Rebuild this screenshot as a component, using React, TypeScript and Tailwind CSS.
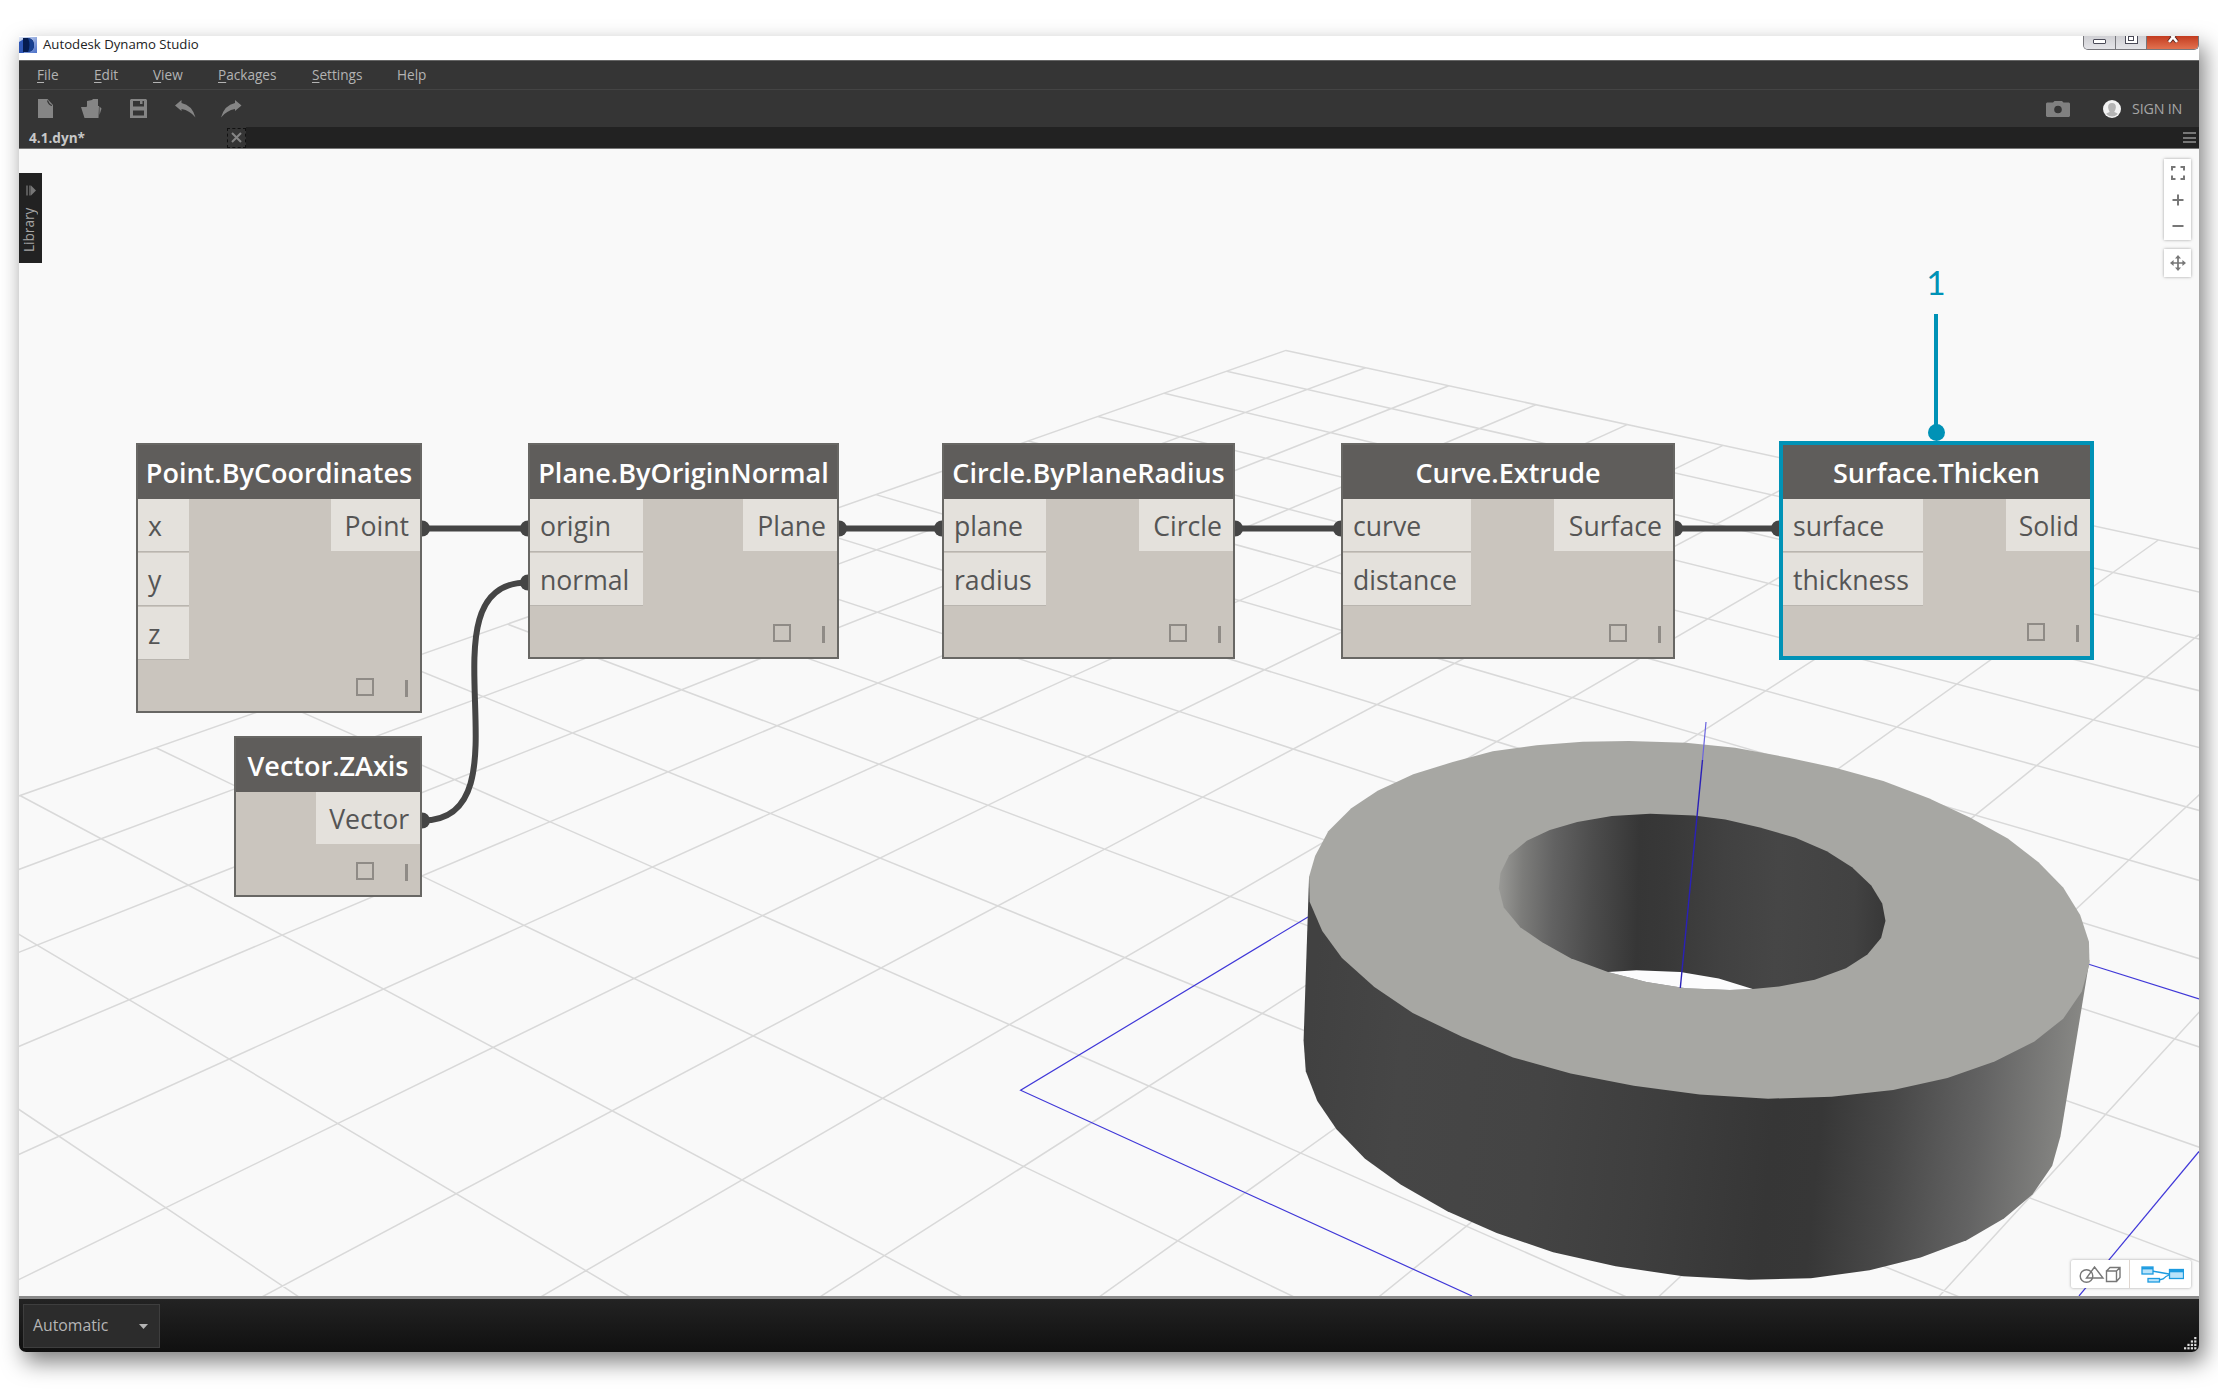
import React from "react";

type NodeSpec = {
  title: string;
  x: number;
  y: number;
  w: number;
  h: number;
  inputs: string[];
  inputWidth: number;
  output: string;
  outputWidth: number;
  selected?: boolean;
};

/* Positions are on the free canvas, measured from its top-left corner. */
const NODES: NodeSpec[] = [
  { title: "Point.ByCoordinates", x: 117, y: 294, w: 286, h: 270, inputs: ["x", "y", "z"], inputWidth: 51, output: "Point", outputWidth: 89 },
  { title: "Vector.ZAxis", x: 215, y: 587, w: 188, h: 161, inputs: [], inputWidth: 0, output: "Vector", outputWidth: 104 },
  { title: "Plane.ByOriginNormal", x: 509, y: 294, w: 311, h: 216, inputs: ["origin", "normal"], inputWidth: 113, output: "Plane", outputWidth: 94 },
  { title: "Circle.ByPlaneRadius", x: 923, y: 294, w: 293, h: 216, inputs: ["plane", "radius"], inputWidth: 102, output: "Circle", outputWidth: 94 },
  { title: "Curve.Extrude", x: 1322, y: 294, w: 334, h: 216, inputs: ["curve", "distance"], inputWidth: 128, output: "Surface", outputWidth: 119 },
  { title: "Surface.Thicken", x: 1762, y: 294, w: 311, h: 215, inputs: ["surface", "thickness"], inputWidth: 140, output: "Solid", outputWidth: 84, selected: true },
];

/* Perspective projection of the ground grid: (t, s) cell indices to canvas pixels. */
const depth = (t: number, s: number) => 1 - 0.0258 * t - 0.0219 * s;
const project = (t: number, s: number) => {
  const w = depth(t, s);
  return `${((1286 - 90.95 * t + 49.66 * s) / w).toFixed(1)} ${((350.4 + 11.27 * t + 9.24 * s) / w).toFixed(1)}`;
};
const GRID = Array.from({ length: 27 }, (_, i) => {
  const sEnd = (0.94 - 0.0258 * i) / 0.0219;
  const tEnd = (0.94 - 0.0219 * i) / 0.0258;
  return `M${project(i, 0)}L${project(i, sEnd)}M${project(0, i)}L${project(tEnd, i)}`;
}).join("");

const RING_TOP =
  "636,107 740,112 830,125 925,150 1012,177 1100,212 1183,257 1258,307 1327,362 1383,424 1428,490 1459,562 1475,632 1476,690 1462,762 1428,833 1375,893 1303,945 1217,988 1118,1019 1006,1037 890,1042 765,1031 645,1008 530,976 425,934 332,880 242,818 172,750 113,674 77,604 54,527 53,462 64,408 88,343 130,283 178,237 243,194 315,162 388,134 468,118 552,109";
const RING_SIDE =
  "53,462 43,890 47,970 68,1048 103,1122 155,1199 220,1266 305,1336 395,1393 498,1443 612,1480 735,1506 855,1515 968,1511 1075,1490 1168,1457 1252,1412 1320,1355 1372,1292 1408,1217 1423,1140 1476,680 800,500";
const RING_HOLE =
  "675,297 755,302 812,312 875,333 940,360 997,395 1043,437 1078,485 1098,532 1104,577 1096,622 1071,665 1032,701 975,731 910,749 862,755 820,758 740,753 668,737 598,711 530,675 478,633 438,594 408,542 399,492 402,452 418,406 450,368 492,340 542,319 605,303";

function Scene() {
  return (
    <svg className="absolute inset-0 h-full w-full" viewBox="19 149 2180 1147" preserveAspectRatio="none">
      <defs>
        <linearGradient id="side" gradientUnits="userSpaceOnUse" x1="43" y1="1000" x2="1476" y2="1100">
          <stop offset="0" stopColor="#414141" />
          <stop offset="0.12" stopColor="#464646" />
          <stop offset="0.3" stopColor="#444444" />
          <stop offset="0.45" stopColor="#3e3e3e" />
          <stop offset="0.6" stopColor="#363636" />
          <stop offset="0.66" stopColor="#373737" />
          <stop offset="0.75" stopColor="#484848" />
          <stop offset="0.86" stopColor="#636363" />
          <stop offset="0.95" stopColor="#7f7f7d" />
          <stop offset="1" stopColor="#8f8f8b" />
        </linearGradient>
        <linearGradient id="bore" gradientUnits="userSpaceOnUse" x1="399" y1="500" x2="1104" y2="515">
          <stop offset="0" stopColor="#999996" />
          <stop offset="0.06" stopColor="#7c7c7a" />
          <stop offset="0.14" stopColor="#626262" />
          <stop offset="0.24" stopColor="#4c4c4c" />
          <stop offset="0.36" stopColor="#363636" />
          <stop offset="0.43" stopColor="#383838" />
          <stop offset="0.58" stopColor="#414141" />
          <stop offset="0.72" stopColor="#464646" />
          <stop offset="0.92" stopColor="#424242" />
          <stop offset="1" stopColor="#383838" />
        </linearGradient>
      </defs>
      <path d={GRID} fill="none" stroke="#d9d9d9" strokeWidth="1.5" />
      <g fill="none" stroke="#4038d8" strokeWidth="1.2">
        <path d="M1308 917L1020.6 1090.3L1472 1296" />
        <path d="M2088 964L2199 999" />
        <path d="M2199 1151.5L2079 1296" />
      </g>
      <g transform="translate(1280 700) scale(0.54845 0.38265)">
        <polygon points={RING_SIDE} fill="url(#side)" />
        <polygon points={RING_TOP} fill="#a7a7a3" />
        <polygon points={RING_HOLE} fill="url(#bore)" />
        <polygon points="598,711 650,706 730,711 800,728 862,755 820,758 740,753 668,737" fill="#fcfcfd" />
      </g>
      <path d="M1706 722L1702.5 760" stroke="#6a64e0" strokeWidth="1.2" />
      <path d="M1702.5 760L1680.3 988" stroke="#2a20b8" strokeWidth="1.4" />
    </svg>
  );
}

function Wires() {
  const links: [number, number][] = [
    [422, 528],
    [839, 942],
    [1235, 1341],
    [1675, 1779],
  ];
  return (
    <svg className="absolute inset-0 h-full w-full" viewBox="19 149 2180 1147" preserveAspectRatio="none">
      <g fill="none" stroke="#454545" strokeWidth="6">
        {links.map(([a, b]) => (
          <path key={a} d={`M${a} 528.5H${b}`} />
        ))}
        <path d="M422 820.5C536 820.5 414 582.5 528 582.5" />
      </g>
      <g fill="#454545">
        {links.map(([a, b]) => (
          <React.Fragment key={a}>
            <circle cx={a} cy="528.5" r="8" />
            <circle cx={b} cy="528.5" r="8" />
          </React.Fragment>
        ))}
        <circle cx="528" cy="582.5" r="8" />
        <circle cx="422" cy="820.5" r="8" />
      </g>
    </svg>
  );
}

function GraphNode({ node }: { node: NodeSpec }) {
  return (
    <div
      className={`absolute flex flex-col border-2 border-[#686764] bg-[#cac5be] text-[#555555] ${node.selected ? "outline-[4px] -outline-offset-2 outline-[#0092b6]" : ""}`}
      style={{ left: node.x, top: node.y, width: node.w, height: node.h }}
    >
      <div className="flex h-[54px] shrink-0 items-center justify-center bg-[#5f5d5b] pt-px text-[27px] leading-none font-semibold whitespace-nowrap text-white">
        {node.title}
      </div>
      <div className="flex items-start justify-between text-[26.6px] leading-none">
        <div className="flex flex-col gap-[2px]">
          {node.inputs.map((name) => (
            <div key={name} className="flex h-[52px] items-center bg-[#e4e1dc] pt-[3px] pl-[10px] shadow-[0_1px_0_#b9b5af]" style={{ width: node.inputWidth }}>
              {name}
            </div>
          ))}
        </div>
        <div className="flex h-[52px] items-center justify-end bg-[#e4e1dc] pt-[3px] pr-[11px]" style={{ width: node.outputWidth }}>
          {node.output}
        </div>
      </div>
      <div className={`mt-auto mb-[15px] flex items-end justify-end gap-[31px] ${node.selected ? "mr-[11px]" : "mr-[12px]"}`}>
        <div className="h-[18px] w-[18px] border-2 border-[#8f8b86]" />
        <div className="-mb-[1px] h-[17px] w-[3px] bg-[#8f8b86]" />
      </div>
    </div>
  );
}

function TitleBar() {
  return (
    <div className="flex h-6 shrink-0 items-start bg-white">
      <svg className="mt-[1px] h-4 w-[18px]" viewBox="0 0 18 16">
        <defs>
          <linearGradient id="logo" x1="0" y1="0" x2="1" y2="1">
            <stop offset="0" stopColor="#dfe6f5" />
            <stop offset="1" stopColor="#4a70c8" />
          </linearGradient>
        </defs>
        <rect width="18" height="16" fill="url(#logo)" />
        <path d="M0 5L5 2V16H0Z" fill="#2f57b5" />
        <path d="M4 1H9Q15 2 15 8Q15 14 9 15H4Z" fill="#061c4f" />
        <path d="M9 1Q15 2 15 8Q15 14 9 15Q12 8 9 1Z" fill="#173f8f" />
      </svg>
      <span className="-mt-px ml-[6px] text-[13.2px] leading-[19px] text-[#222]">Autodesk Dynamo Studio</span>
      <div className="ml-auto flex h-[14px] w-[116px] overflow-hidden rounded-b-[5px] border border-t-0 border-[#77777c] bg-[#d8d8dc]">
        <div className="flex w-8 justify-center border-r border-[#77777c] bg-gradient-to-b from-[#d0d0d4] to-[#e4e4e8] pt-[3px]">
          <div className="h-[5px] w-[13px] rounded-[1px] border border-[#4b4b58] bg-white" />
        </div>
        <div className="flex w-[31px] justify-center border-r border-[#77777c] bg-gradient-to-b from-[#d0d0d4] to-[#e4e4e8]">
          <div className="-mt-[3px] flex h-[11px] w-[13px] items-center justify-center border border-[#4b4b58] bg-white">
            <div className="h-[5px] w-[6px] border border-[#4b4b58]" />
          </div>
        </div>
        <div className="flex flex-1 justify-center bg-gradient-to-b from-[#c23a1e] to-[#e2714f]">
          <svg className="h-2 w-3" viewBox="0 0 12 8">
            <path d="M2 -4L10 6M10 -4L2 6" stroke="#5a2a26" strokeWidth="4.4" />
            <path d="M2 -4L10 6M10 -4L2 6" stroke="#fff" strokeWidth="2.6" />
          </svg>
        </div>
      </div>
    </div>
  );
}

const MENUS = [
  { label: "File", width: "w-[57px]" },
  { label: "Edit", width: "w-[59px]" },
  { label: "View", width: "w-[65px]" },
  { label: "Packages", width: "w-[94px]" },
  { label: "Settings", width: "w-[85px]" },
];

function MenuBar() {
  return (
    <div className="flex h-[30px] shrink-0 items-center border-t border-b border-t-[#666] border-b-[#444] bg-[#353535] pt-px pl-[18px] text-[13.6px] text-[#b3b3b3]">
      {MENUS.map((m) => (
        <span key={m.label} className={m.width}>
          <span className="underline underline-offset-2">{m.label[0]}</span>
          {m.label.slice(1)}
        </span>
      ))}
      <span>Help</span>
    </div>
  );
}

function ToolBar() {
  return (
    <div className="flex h-[37px] shrink-0 items-center bg-[#353535] pl-[19px] text-[#858585]">
      <svg className="h-[19px] w-[15px]" viewBox="0 0 15 19" fill="currentColor">
        <path d="M0 0H9.5L15 6V19H0Z" />
        <path d="M9.5 1.5Q11 6 14 6.5" fill="none" stroke="#353535" strokeWidth="1.2" />
      </svg>
      <svg className="ml-7 h-[19px] w-[22px]" viewBox="0 0 22 19" fill="currentColor">
        <path d="M6 2L11 1L12 0H17V9H6Z" />
        <path d="M0 8H5L7 7H18L17.5 19H3.5Z" />
        <path d="M18.500 7.500L20.500 9.500L18.500 16Z" />
      </svg>
      <svg className="ml-[27px] h-[19px] w-[17px]" viewBox="0 0 17 19" fill="currentColor" fillRule="evenodd">
        <path d="M1 0H16L17 1V19H0V1ZM3 2V7.500H14V2ZM3 11.500V16.500H14V11.500Z" />
        <path d="M10 2H12.500V5H10Z" />
      </svg>
      <svg className="ml-7 h-[18px] w-[21px]" viewBox="0 0 21 18" fill="currentColor">
        <path d="M0 5.500L6.500 0V3Q17 5 20.500 17.500Q15 10.500 6.500 9V11Z" />
      </svg>
      <svg className="ml-[25px] h-[18px] w-[21px]" viewBox="0 0 21 18" fill="currentColor">
        <path d="M20.500 5.500L14 0V3Q3.500 5 0 17.500Q5.500 10.500 14 9V11Z" />
      </svg>
      <svg className="ml-auto h-[17px] w-6" viewBox="0 0 24 17">
        <path d="M1 2.500H7L8.500 1H16L17.500 2.500H23L24 3.500V16L23 17H1L0 16V3.500Z" fill="#808080" />
        <circle cx="12" cy="9.500" r="3.800" fill="#353535" />
      </svg>
      <svg className="ml-[33px] h-[18px] w-[18px]" viewBox="0 0 18 18">
        <circle cx="9" cy="9" r="9" fill="#f2f2f2" />
        <path d="M9 3C6 3 4.800 5 5.200 8C5.500 10 6.500 11 6.700 12C5 13 3.500 13 3.200 14Q9 19 14.800 14C14.500 13 13 13 11.300 12C11.500 11 12.500 10 12.800 8C13.200 5 12 3 9 3Z" fill="#b4b4b4" />
      </svg>
      <span className="mr-[18px] ml-[11px] w-[49px] text-[14.3px] tracking-[-0.2px] whitespace-nowrap text-[#a5a5a5]">SIGN IN</span>
    </div>
  );
}

function TabStrip() {
  return (
    <div className="flex h-[22px] shrink-0 border-b border-[#777] bg-[#222222]">
      <div className="flex w-[227px] items-center justify-between bg-[#353535] pl-[10px]">
        <span className="text-[13.6px] leading-none font-bold text-[#c8c8c8]">4.1.dyn*</span>
        <div className="flex h-[20px] w-[19px] items-center justify-center border border-dashed border-[#111]">
          <svg className="h-[11px] w-[11px]" viewBox="0 0 11 11">
            <path d="M1 1L10 10M10 1L1 10" stroke="#858585" strokeWidth="2" />
          </svg>
        </div>
      </div>
      <div className="mt-[5px] mr-[3px] ml-auto flex flex-col gap-[2.500px]">
        <div className="h-[2px] w-[13px] bg-[#777]" />
        <div className="h-[2px] w-[13px] bg-[#777]" />
        <div className="h-[2px] w-[13px] bg-[#777]" />
      </div>
    </div>
  );
}

function ViewControls() {
  return (
    <div className="absolute top-[10px] right-2 flex w-[27px] flex-col gap-[9px]">
      <div className="flex h-[81px] flex-col items-center justify-between bg-white pt-[7px] pb-[9px] shadow-[0_0_3px_rgba(0,0,0,0.35)]">
        <svg className="h-[14px] w-[14px]" viewBox="0 0 14 14" fill="none" stroke="#777" strokeWidth="2">
          <path d="M1 4.500V1H4.500M9.500 1H13V4.500M13 9.500V13H9.500M4.500 13H1V9.500" />
        </svg>
        <svg className="h-3 w-3" viewBox="0 0 12 12" stroke="#777" strokeWidth="2">
          <path d="M6 0.500V11.500M0.500 6H11.500" />
        </svg>
        <svg className="h-[11px] w-3" viewBox="0 0 12 11" stroke="#777" strokeWidth="2">
          <path d="M0.500 6H11.500" />
        </svg>
      </div>
      <div className="flex h-7 items-center justify-center bg-white shadow-[0_0_3px_rgba(0,0,0,0.35)]">
        <svg className="h-4 w-4" viewBox="0 0 16 16">
          <path d="M8 2V14M2 8H14" stroke="#777" strokeWidth="1.700" />
          <path d="M8 0L11 3.600H5ZM8 16L5 12.400H11ZM0 8L3.600 5V11ZM16 8L12.400 11V5Z" fill="#777" />
        </svg>
      </div>
    </div>
  );
}

function ViewToggle() {
  return (
    <div className="absolute right-2 bottom-2 flex h-7 w-[120px] rounded-[2px] bg-white shadow-[0_0_3px_rgba(0,0,0,0.35)]">
      <div className="flex flex-1 items-center justify-center border-r border-[#dfd6cf]">
        <svg className="h-[17px] w-[42px]" viewBox="0 0 42 17" fill="none" stroke="#777" strokeWidth="1.400">
          <circle cx="7.500" cy="10" r="6.300" />
          <path d="M15.500 1L24 12H7.500Z" />
          <path d="M27.500 5H37.500V15.500H27.500ZM27.500 5L31 1.500H41V11.500L37.500 15.500M37.500 5L41 1.500" />
        </svg>
      </div>
      <div className="flex flex-1 items-center justify-center pl-[3px]">
        <svg className="h-[17px] w-[43px]" viewBox="0 0 43 17" stroke="#1c9be0" strokeWidth="1.300">
          <path d="M11 5L28 8M18 14L22 13Q25 10 28 9" fill="none" />
          <rect x="1" y="1" width="11" height="7" fill="#b9e3fa" />
          <path d="M1 2.300H12" strokeWidth="2.200" />
          <rect x="7" y="12.500" width="11.500" height="3.500" fill="#b9e3fa" />
          <rect x="28.500" y="3.500" width="14" height="9" fill="#b9e3fa" />
          <path d="M28.500 5H42.500" strokeWidth="2.600" />
        </svg>
      </div>
    </div>
  );
}

function Workspace() {
  return (
    <div className="relative h-[1147px] shrink-0 overflow-hidden bg-[#f9f9f9]">
      <Scene />
      <Wires />
      {NODES.map((n) => (
        <GraphNode key={n.title} node={n} />
      ))}
      <div className="absolute top-[117px] left-[1897px] flex w-10 flex-col items-center">
        <span className="font-['Lato'] text-[33.500px] leading-8 text-[#0092b6]">1</span>
        <div className="mt-4 h-[113px] w-1 bg-[#0092b6]" />
        <div className="-mt-[3px] h-[17px] w-[17px] rounded-full bg-[#0092b6]" />
      </div>
      <div className="absolute top-6 left-0 flex h-[90px] w-[23px] flex-col items-center bg-[#222] pt-3 text-[#999]">
        <svg className="h-[11px] w-[10px]" viewBox="0 0 10 11">
          <path d="M1 0.500V10.500M4 0.500V10.500" stroke="#777" strokeWidth="1.300" />
          <path d="M5 0.500L10 5.500L5 10.500Z" fill="#777" />
        </svg>
        <span className="mt-[9px] mr-[3px] h-[50px] rotate-180 text-center text-[13.600px] leading-[22px] text-[#a5a5a5] [writing-mode:vertical-rl]">Library</span>
      </div>
      <ViewControls />
      <ViewToggle />
    </div>
  );
}

function StatusBar() {
  const dots = ["3,0", "2,1", "3,1", "1,2", "2,2", "3,2", "0,3", "1,3", "2,3", "3,3"];
  return (
    <div className="flex flex-1 justify-between border-t-[3px] border-[#8a8a8a] bg-gradient-to-b from-[#232323] to-[#101010] pl-1">
      <div className="mt-[5px] flex h-11 w-[137px] items-center justify-between border border-[#3e3e3e] bg-[#2c2c2c] pr-[11px] pl-[9px]">
        <span className="text-[15.800px] text-[#b5b5b5]">Automatic</span>
        <svg className="h-[5px] w-[9px]" viewBox="0 0 9 5">
          <path d="M0 0H9L4.500 5Z" fill="#b5b5b5" />
        </svg>
      </div>
      <svg className="mr-[2px] mb-[2px] h-[13px] w-[13px] self-end" viewBox="0 0 13 13" fill="#ddd">
        {dots.map((d) => {
          const [cx, cy] = d.split(",").map(Number);
          return <rect key={d} x={cx * 3.4} y={cy * 3.4} width="2.200" height="2.200" />;
        })}
      </svg>
    </div>
  );
}

export default function App() {
  return (
    <div className="h-[1394px] w-[2218px] overflow-hidden bg-white pt-9 pl-[19px] font-['Open_Sans',sans-serif]">
      <div className="h-[1316px] w-[2180px] rounded-b-[7px] shadow-[5px_10px_22px_rgba(0,0,0,0.5)]">
        <div className="flex h-full flex-col overflow-hidden rounded-b-[7px]">
          <TitleBar />
          <MenuBar />
          <ToolBar />
          <TabStrip />
          <Workspace />
          <StatusBar />
        </div>
      </div>
    </div>
  );
}
